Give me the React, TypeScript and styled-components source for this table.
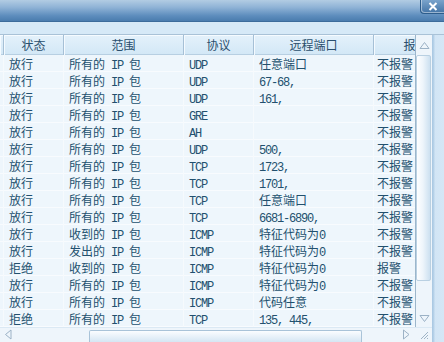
import React from "react";
import styled, { createGlobalStyle } from "styled-components";

const GlobalStyle = createGlobalStyle`
  html, body { margin: 0; padding: 0; overflow: hidden; background: #d3e6f5; }
  #root { width: 444px; height: 342px; }
`;

const FONT = `"Noto Sans CJK SC", "Liberation Mono", monospace`;

const Window = styled.div`
  width: 444px;
  height: 342px;
  display: flex;
  flex-direction: column;
  overflow: hidden;
  font-family: ${FONT};
  font-size: 12px;
  color: #22506e;
`;

const TitleBar = styled.div`
  height: 22px;
  box-sizing: border-box;
  border-bottom: 1px solid #3c6c9b;
  background: linear-gradient(#b2cce3 0%, #8fb3d6 35%, #5d8dbd 75%, #4a7cae 100%);
  display: flex;
  justify-content: flex-end;
  align-items: flex-start;
`;

const CloseButton = styled.div`
  width: 24px;
  height: 14px;
  box-sizing: border-box;
  border: 1px solid #2d5d8c;
  border-top: none;
  border-right: none;
  border-bottom-left-radius: 4px;
  background: linear-gradient(#7aa3cb, #4475a7);
  box-shadow: inset 1px -1px 0 rgba(255, 255, 255, 0.45);
  display: flex;
  align-items: center;
  justify-content: center;
`;

const Band = styled.div`
  height: 12px;
  background: #d6e9f7;
  border-bottom: 1px solid #a9c2d7;
`;

const Body = styled.div`
  flex: 1;
  display: flex;
  min-height: 0;
`;

const Main = styled.div`
  width: 432px;
  display: flex;
  flex-direction: column;
`;

const Upper = styled.div`
  flex: 1;
  display: flex;
  min-height: 0;
`;

const Viewport = styled.div`
  width: 415px;
  overflow: hidden;
  background: #eef6fc;
`;

const COLS = "4px 60px 120px 70px 120px 84px";

const HeaderRow = styled.div`
  display: grid;
  grid-template-columns: ${COLS};
  height: 20px;
  background: linear-gradient(#e4f1fb, #d2e7f6);
  box-shadow: inset 0 1px 0 #f6fbff, inset 0 -1px 0 #b7cfe2;
  width: max-content;
`;

const HeaderCell = styled.div`
  box-sizing: border-box;
  border-right: 1px solid #a6c0d6;
  box-shadow: inset 1px 0 0 #f4faff;
  text-align: center;
  line-height: 20px;
  white-space: nowrap;
  overflow: hidden;
  color: #2a4f6d;
`;

const DataRow = styled.div`
  display: grid;
  grid-template-columns: ${COLS};
  height: 17px;
  width: max-content;
  box-shadow: inset 0 -1px 0 #f8fbfe;
`;

const Cell = styled.div<{ $pad?: number }>`
  box-sizing: border-box;
  padding-left: ${(p) => (p.$pad ?? 4)}px;
  line-height: 17px;
  white-space: pre;
  overflow: hidden;
  box-shadow: inset -1px 0 0 #f6fafd;
`;

const Latin = styled.span`
  font-family: "Liberation Mono", monospace;
  font-size: 12px;
  letter-spacing: -1.2px;
`;

const VScroll = styled.div`
  width: 17px;
  box-sizing: border-box;
  border-left: 1px solid #9cb6cb;
  background: #eef5fb;
  display: flex;
  flex-direction: column;
`;

const ArrowBox = styled.div<{ $h: number; $w?: number }>`
  height: ${(p) => p.$h}px;
  width: ${(p) => (p.$w ? `${p.$w}px` : "auto")};
  flex-shrink: 0;
  display: flex;
  align-items: center;
  justify-content: center;
`;

const VThumb = styled.div`
  height: 226px;
  margin: 0 1px 0 0;
  box-sizing: border-box;
  border: 1px solid #b9d0e2;
  border-radius: 2px;
  background: linear-gradient(90deg, #fdfeff 0%, #eef5fb 45%, #cce0f0 100%);
  flex-shrink: 0;
`;

const VTrack = styled.div`
  flex: 1;
`;

const HScroll = styled.div`
  height: 15px;
  display: flex;
  background: #eef5fb;
  box-shadow: inset 0 1px 0 #dbe9f4;
`;

const HTrack = styled.div`
  flex: 1;
  display: flex;
  align-items: stretch;
  padding-top: 3px;
`;

const HThumb = styled.div`
  box-sizing: border-box;
  border: 1px solid #a9c3d8;
  border-bottom: none;
  border-radius: 2px 2px 0 0;
  background: linear-gradient(#fbfdff, #d5e6f3);
`;

const Frame = styled.div`
  width: 12px;
  background: linear-gradient(90deg, #a7c6e1 0px, #b9d4ea 2px, #d2e5f5 3px, #d4e7f6 100%);
`;

const Triangle: React.FC<{ dir: "up" | "down" | "left" | "right" }> = ({ dir }) => {
  const pts: Record<string, string> = {
    up: "1,7.5 5.5,1.5 10,7.5",
    down: "1,1.5 5.5,7.5 10,1.5",
    left: "7,1 1.5,5.5 7,10",
    right: "1.5,1 7,5.5 1.5,10",
  };
  const vertical = dir === "up" || dir === "down";
  return (
    <svg width={vertical ? 11 : 9} height={vertical ? 9 : 11} viewBox={vertical ? "0 0 11 9" : "0 0 9 11"}>
      <polygon points={pts[dir]} fill="none" stroke="#9cb2c6" strokeWidth="1" />
    </svg>
  );
};

const Grip = () => (
  <svg width="10" height="10" viewBox="0 0 10 10">
    <path d="M9 2 L2 9 M9 5 L5 9 M9 8 L8 9" stroke="#9fb4c6" strokeWidth="1" />
  </svg>
);

const CellText: React.FC<{ text: string }> = ({ text }) => {
  const parts = text.match(/[\x20-\x7e]+|[^\x20-\x7e]+/g) ?? [];
  return (
    <>
      {parts.map((p, i) =>
        /^[\x20-\x7e]+$/.test(p) ? <Latin key={i}>{p}</Latin> : <React.Fragment key={i}>{p}</React.Fragment>
      )}
    </>
  );
};

const headers = ["", "状态", "范围", "协议", "远程端口", "报警"];

const rows: string[][] = [
  ["放行", "所有的 IP 包", "UDP", "任意端口", "不报警"],
  ["放行", "所有的 IP 包", "UDP", "67-68,", "不报警"],
  ["放行", "所有的 IP 包", "UDP", "161,", "不报警"],
  ["放行", "所有的 IP 包", "GRE", "", "不报警"],
  ["放行", "所有的 IP 包", "AH", "", "不报警"],
  ["放行", "所有的 IP 包", "UDP", "500,", "不报警"],
  ["放行", "所有的 IP 包", "TCP", "1723,", "不报警"],
  ["放行", "所有的 IP 包", "TCP", "1701,", "不报警"],
  ["放行", "所有的 IP 包", "TCP", "任意端口", "不报警"],
  ["放行", "所有的 IP 包", "TCP", "6681-6890,", "不报警"],
  ["放行", "收到的 IP 包", "ICMP", "特征代码为0", "不报警"],
  ["放行", "发出的 IP 包", "ICMP", "特征代码为0", "不报警"],
  ["拒绝", "收到的 IP 包", "ICMP", "特征代码为0", "报警"],
  ["放行", "所有的 IP 包", "ICMP", "特征代码为0", "不报警"],
  ["放行", "所有的 IP 包", "ICMP", "代码任意", "不报警"],
  ["拒绝", "所有的 IP 包", "TCP", "135, 445,", "不报警"],
];

const hThumb = { left: 73, width: 273 };

export default function App() {
  return (
    <>
      <GlobalStyle />
      <Window>
        <TitleBar>
          <CloseButton>
            <svg width="10" height="9" viewBox="0 0 10 9">
              <path d="M1.5 1 L8.5 8 M8.5 1 L1.5 8" stroke="#ffffff" strokeWidth="2" />
            </svg>
          </CloseButton>
        </TitleBar>
        <Band />
        <Body>
          <Main>
            <Upper>
              <Viewport>
                <HeaderRow>
                  {headers.map((h, i) => (
                    <HeaderCell key={i}>{h}</HeaderCell>
                  ))}
                </HeaderRow>
                {rows.map((r, i) => (
                  <DataRow key={i}>
                    <Cell $pad={0} />
                    {r.map((c, j) => (
                      <Cell key={j} $pad={j === 4 ? 3 : 5}>
                        <CellText text={c} />
                      </Cell>
                    ))}
                  </DataRow>
                ))}
              </Viewport>
              <VScroll>
                <ArrowBox $h={20}>
                  <Triangle dir="up" />
                </ArrowBox>
                <VThumb />
                <VTrack />
                <ArrowBox $h={17}>
                  <Triangle dir="down" />
                </ArrowBox>
              </VScroll>
            </Upper>
            <HScroll>
              <ArrowBox $h={15} $w={16}>
                <Triangle dir="left" />
              </ArrowBox>
              <HTrack>
                <HThumb style={{ marginLeft: hThumb.left, width: hThumb.width }} />
              </HTrack>
              <ArrowBox $h={15} $w={17}>
                <Triangle dir="right" />
              </ArrowBox>
              <ArrowBox $h={15} $w={17}>
                <Grip />
              </ArrowBox>
            </HScroll>
          </Main>
          <Frame />
        </Body>
      </Window>
    </>
  );
}
